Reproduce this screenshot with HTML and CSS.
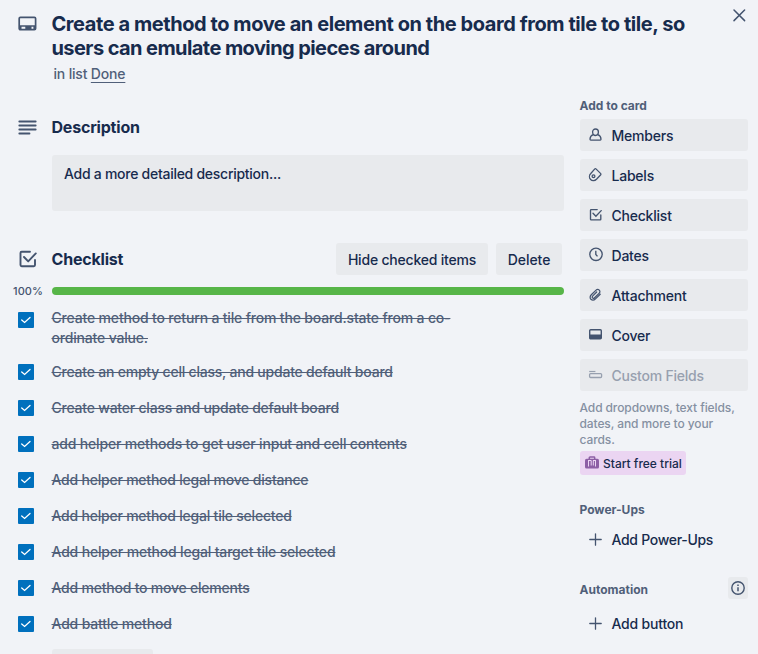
FILE: index.html
```html
<!DOCTYPE html>
<html lang="en">
<head>
<meta charset="utf-8">
<title>Card details</title>
<link rel="stylesheet" href="styles.css">
</head>
<body>
<svg class="defs" width="0" height="0">
  <symbol id="tick" viewBox="0 0 16 16"><path d="M3.700 8l2.900 2.500 5.400-5" fill="none" stroke="#fff" stroke-width="1.300" stroke-linecap="round"/></symbol>
  <symbol id="check" viewBox="0 0 20 20"><path d="M12 2.800H3.700Q2.500 2.800 2.500 4v12.100q0 1.200 1.200 1.200h12.100q1.200 0 1.200-1.200V11M6 8l4.200 4.400 7.600-8" fill="none" stroke="currentColor" stroke-width="1.900" stroke-linecap="round" stroke-linejoin="round"/></symbol>
  <symbol id="plus" viewBox="0 0 16 16"><path d="M7.500 1.800v11.400M1.800 7.500h11.400" fill="none" stroke="currentColor" stroke-width="1.300" stroke-linecap="round"/></symbol>
</svg>
<div class="dialog">
  <button class="close" aria-label="Close"><svg viewBox="0 0 16 16" width="16" height="16"><path d="M3 3l10.600 10.600M13.600 3L3 13.600" fill="none" stroke="currentColor" stroke-width="1.500" stroke-linecap="round"/></svg></button>
  <header class="header">
    <svg class="header-icon" viewBox="0 0 20 16" width="20" height="16"><rect x="1.200" y="1.300" width="16.400" height="12.400" rx="1.200" fill="none" stroke="currentColor" stroke-width="1.700"/><path d="M2 9.200h15v1.600H2zM7.300 10.500h6.200v2.700H7.300zM15.400 10.500H17v2.700h-1.600zM2 10.500h1.500v2.700H2z" fill="currentColor"/></svg>
    <div>
      <h1 class="title">Create a method to move an element on the board from tile to tile, so<br><span class="title-end">users can emulate moving pieces around</span></h1>
      <p class="in-list">in list <a class="list-link">Done</a></p>
    </div>
  </header>
  <div class="columns">
    <main class="main">
      <section class="section">
        <svg class="lines-icon" viewBox="0 0 20 16" width="20" height="16"><path d="M1.300 2.500h16.400M1.300 6.500h16.400M1.300 10.500h16.400M1.300 14.500H11.500" fill="none" stroke="currentColor" stroke-width="1.800" stroke-linecap="round"/></svg>
        <h2 class="heading">Description</h2>
      </section>
      <div class="description">Add a more detailed description...</div>
      <section class="section checklist-head">
        <svg class="check-icon" width="20" height="20"><use href="#check"/></svg>
        <h2 class="heading checklist-title">Checklist</h2>
        <button class="btn hide-btn">Hide checked items</button>
        <button class="btn delete-btn">Delete</button>
      </section>
      <div class="progress"><span class="percent">100%</span><div class="bar"></div></div>
      <ul class="items">
        <li class="item"><svg class="box"><use href="#tick"/></svg><span class="text loose">Create method to return a tile from the board.state from a co-<br>ordinate value.</span></li>
        <li class="item"><svg class="box"><use href="#tick"/></svg><span class="text">Create an empty cell class, and update default board</span></li>
        <li class="item"><svg class="box"><use href="#tick"/></svg><span class="text">Create water class and update default board</span></li>
        <li class="item"><svg class="box"><use href="#tick"/></svg><span class="text loose">add helper methods to get user input and cell contents</span></li>
        <li class="item"><svg class="box"><use href="#tick"/></svg><span class="text">Add helper method legal move distance</span></li>
        <li class="item"><svg class="box"><use href="#tick"/></svg><span class="text">Add helper method legal tile selected</span></li>
        <li class="item"><svg class="box"><use href="#tick"/></svg><span class="text loose">Add helper method legal target tile selected</span></li>
        <li class="item"><svg class="box"><use href="#tick"/></svg><span class="text">Add method to move elements</span></li>
        <li class="item"><svg class="box"><use href="#tick"/></svg><span class="text loose">Add battle method</span></li>
      </ul>
      <div class="add-item"></div>
    </main>
    <aside class="side">
      <h3 class="side-title">Add to card</h3>
      <div class="side-list">
        <button class="side-btn"><svg viewBox="0 0 16 16"><path d="M7.500 2c1.800 0 2.900 1.300 2.900 3.100S9.300 8.500 7.500 8.500 4.600 6.900 4.600 5.100 5.700 2 7.500 2zM5.200 7.700C3.100 8.500 2 10.100 2 12.300q0 .8.800.8h9.400q.8 0 .8-.8c0-2.200-1.100-3.800-3.200-4.600" fill="none" stroke="currentColor" stroke-width="1.300"/></svg>Members</button>
        <button class="side-btn"><svg viewBox="0 0 16 16"><path d="M6.600 2.100q.8-.8 1.600 0l4.300 4.300q.8.800 0 1.600l-4 4.200c-1.700 1.700-4.300 1.900-5.900.3s-1.500-4.300.2-6z" fill="none" stroke="currentColor" stroke-width="1.300"/><circle cx="5.500" cy="9.200" r="1.400" fill="none" stroke="currentColor" stroke-width="1.300"/></svg>Labels</button>
        <button class="side-btn"><svg viewBox="0 0 16 16"><path d="M9.200 2.600H3.200q-.7 0-.7.700v8.900q0 .7.700.7h8.900q.7 0 .7-.7V8M5 6.300l2.900 3 5.300-5.700" fill="none" stroke="currentColor" stroke-width="1.350" stroke-linecap="round"/></svg>Checklist</button>
        <button class="side-btn"><svg viewBox="0 0 16 16"><circle cx="8" cy="7.300" r="6.200" fill="none" stroke="currentColor" stroke-width="1.350"/><path d="M7.800 3.800v3.700l1.700 1.900" fill="none" stroke="currentColor" stroke-width="1.350"/></svg>Dates</button>
        <button class="side-btn"><svg viewBox="0 0 16 16"><path d="M12.200 7.200l-4.700 4.700c-1.400 1.400-3.400 1.500-4.600.4s-1-3.100.4-4.500l4.500-4.400c1.100-1.100 2.600-1.100 3.500-.3s.8 2.300-.3 3.300L6.600 10.700c-.7.700-1.600.7-2.100.2s-.4-1.300.3-2L8.700 5" fill="none" stroke="currentColor" stroke-width="1.250" stroke-linecap="round"/></svg>Attachment</button>
        <button class="side-btn"><svg viewBox="0 0 16 16"><rect x="1.700" y="2.700" width="11.600" height="9" rx="1" fill="none" stroke="currentColor" stroke-width="1.400"/><path d="M1.700 7.500h11.600v4.200H1.700z" fill="currentColor"/></svg>Cover</button>
        <button class="side-btn disabled"><svg viewBox="0 0 16 16"><path d="M1.200 4.500h6.200" stroke="currentColor" stroke-width="1.200"/><rect x="1.600" y="6.600" width="12" height="3.900" rx="1" fill="none" stroke="currentColor" stroke-width="1.300"/></svg>Custom Fields</button>
      </div>
      <p class="hint">Add dropdowns, text fields,<br>dates, and more to your<br>cards.</p>
      <button class="trial"><svg viewBox="0 0 16 14" width="16" height="14"><path d="M5.300 3V1.800q0-.7.700-.7h4q.7 0 .7.700V3" fill="none" stroke="currentColor" stroke-width="1.500"/><rect x="1" y="2.800" width="14" height="9.800" rx="1.600" fill="currentColor"/><path d="M4.500 4.500v6M11.500 4.500v6M7.200 4.500v5M9.300 4.500v5M4 4.500h3.200M9 4.500h3" fill="none" stroke="#ebd5f2" stroke-width="1"/></svg>Start free trial</button>
      <h3 class="side-title power-title">Power-Ups</h3>
      <button class="side-btn plain"><svg><use href="#plus"/></svg>Add Power-Ups</button>
      <div class="auto-row"><h3 class="side-title">Automation</h3><span class="info"><svg viewBox="0 0 16 16" width="16" height="16"><circle cx="8" cy="8" r="6.200" fill="none" stroke="currentColor" stroke-width="1.400"/><path d="M8 7.200v4M8 4.600v1.500" stroke="currentColor" stroke-width="1.500"/></svg></span></div>
      <button class="side-btn plain"><svg><use href="#plus"/></svg><span class="add-button-label">Add button</span></button>
    </aside>
  </div>
</div>
</body>
</html>
```
FILE: styles.css
```css
* { box-sizing: border-box; }
body { margin: 0; background: #f1f3f7; color: #172b4d; font: 450 14px/20px Inter, "Liberation Sans", sans-serif; overflow: hidden; }
button { border: 0; margin: 0; font: inherit; color: inherit; }
h1, h2, h3, p, ul { margin: 0; padding: 0; }
svg { color: #44546f; flex: none; }
.defs { position: absolute; }
.dialog { position: relative; width: 758px; height: 654px; overflow: hidden; }
.close { position: absolute; right: 11px; top: 7px; padding: 0; width: 16px; height: 16px; background: none; }
.close svg { display: block; }
.header { display: flex; height: 98px; padding: 12px 0 0 18px; }
.header-icon { margin: 4px 14px 0 0; }
.title { margin-left: -.5px; font-size: 20px; line-height: 24px; font-weight: 650; letter-spacing: -.43px; white-space: nowrap; }
.title-end { letter-spacing: -.58px; }
.in-list { margin: 4px 0 0 1.5px; color: #505f79; letter-spacing: -.18px; }
.list-link { text-decoration: underline; text-underline-offset: 3px; }
.columns { display: flex; gap: 16px; }
.main { width: 564px; }
.section { display: flex; align-items: center; height: 32px; padding-left: 18px; margin-top: 13px; }
.heading { margin-left: 13.5px; font-size: 16px; line-height: 20px; font-weight: 650; letter-spacing: -.2px; }
.description { margin: 12px 0 0 52px; height: 56px; padding: 9px 12px; background: #e8eaed; border-radius: 3px; letter-spacing: -.27px; }
.checklist-head { margin-top: 32px; padding-right: 2px; }
.checklist-title { margin-right: auto; }
.btn { height: 32px; padding: 2px 0 0; background: #e8eaed; border-radius: 3px; white-space: nowrap; letter-spacing: -.18px; }
.hide-btn { width: 152px; margin-right: 8px; letter-spacing: -.2px; }
.delete-btn { width: 66px; letter-spacing: -.05px; }
.progress { display: flex; align-items: center; height: 8px; margin-top: 12px; }
.percent { width: 52px; padding-left: 13px; font-size: 11px; color: #44546f; letter-spacing: .1px; }
.bar { flex: 1; height: 8px; border-radius: 4px; background: #57b548; }
.items { list-style: none; margin-top: 7px; }
.item { display: flex; min-height: 36px; padding-left: 18px; }
.box { width: 16px; height: 16px; margin: 10px 18px 0 0; background: #0070bd; border-radius: 1px; }
.text { align-self: center; padding: 6px 0; margin-left: -.5px; color: #505f79; text-decoration: line-through; white-space: nowrap; letter-spacing: -.22px; }
.loose { letter-spacing: -.175px; }
.add-item { width: 101px; height: 32px; margin: 7px 0 0 52px; background: #e8eaed; border-radius: 3px; }
.side { width: 168px; }
.side-title { margin-left: -.5px; font-size: 12px; line-height: 16px; font-weight: 650; color: #505f79; }
.side-list { display: flex; flex-direction: column; gap: 8px; margin-top: 5px; }
.side-btn { display: flex; align-items: center; width: 168px; height: 32px; padding: 2px 8px 0; background: #e8eaed; border-radius: 3px; text-align: left; white-space: nowrap; letter-spacing: -.22px; }
.side-btn svg { width: 16px; height: 16px; margin: -2px 7.5px 0 0; }
.disabled, .disabled svg { color: #97a0af; }
.plain { background: none; padding-top: 0; letter-spacing: -.3px; }
.plain svg { margin-top: 0; }
.add-button-label { letter-spacing: -.2px; }
.hint { margin-top: 9px; margin-left: -.5px; font-size: 12px; line-height: 16px; color: #8590a2; white-space: nowrap; letter-spacing: -.1px; }
.trial { display: flex; align-items: center; gap: 3px; width: 106px; height: 24px; margin-top: 3px; padding: 1px 0 0 4px; background: #ebd5f2; border-radius: 3px; font-size: 12px; white-space: nowrap; }
.trial svg { color: #8d5fa5; margin-top: -1px; }
.power-title { margin-top: 27px; margin-bottom: 6px; }
.auto-row { display: flex; justify-content: space-between; align-items: center; height: 22px; margin: 21px 0 9px; }
.auto-row .side-title { margin-top: 3px; }
.info { display: flex; align-items: center; justify-content: center; width: 20px; height: 22px; background: #e8eaed; border-radius: 3px; }
```
